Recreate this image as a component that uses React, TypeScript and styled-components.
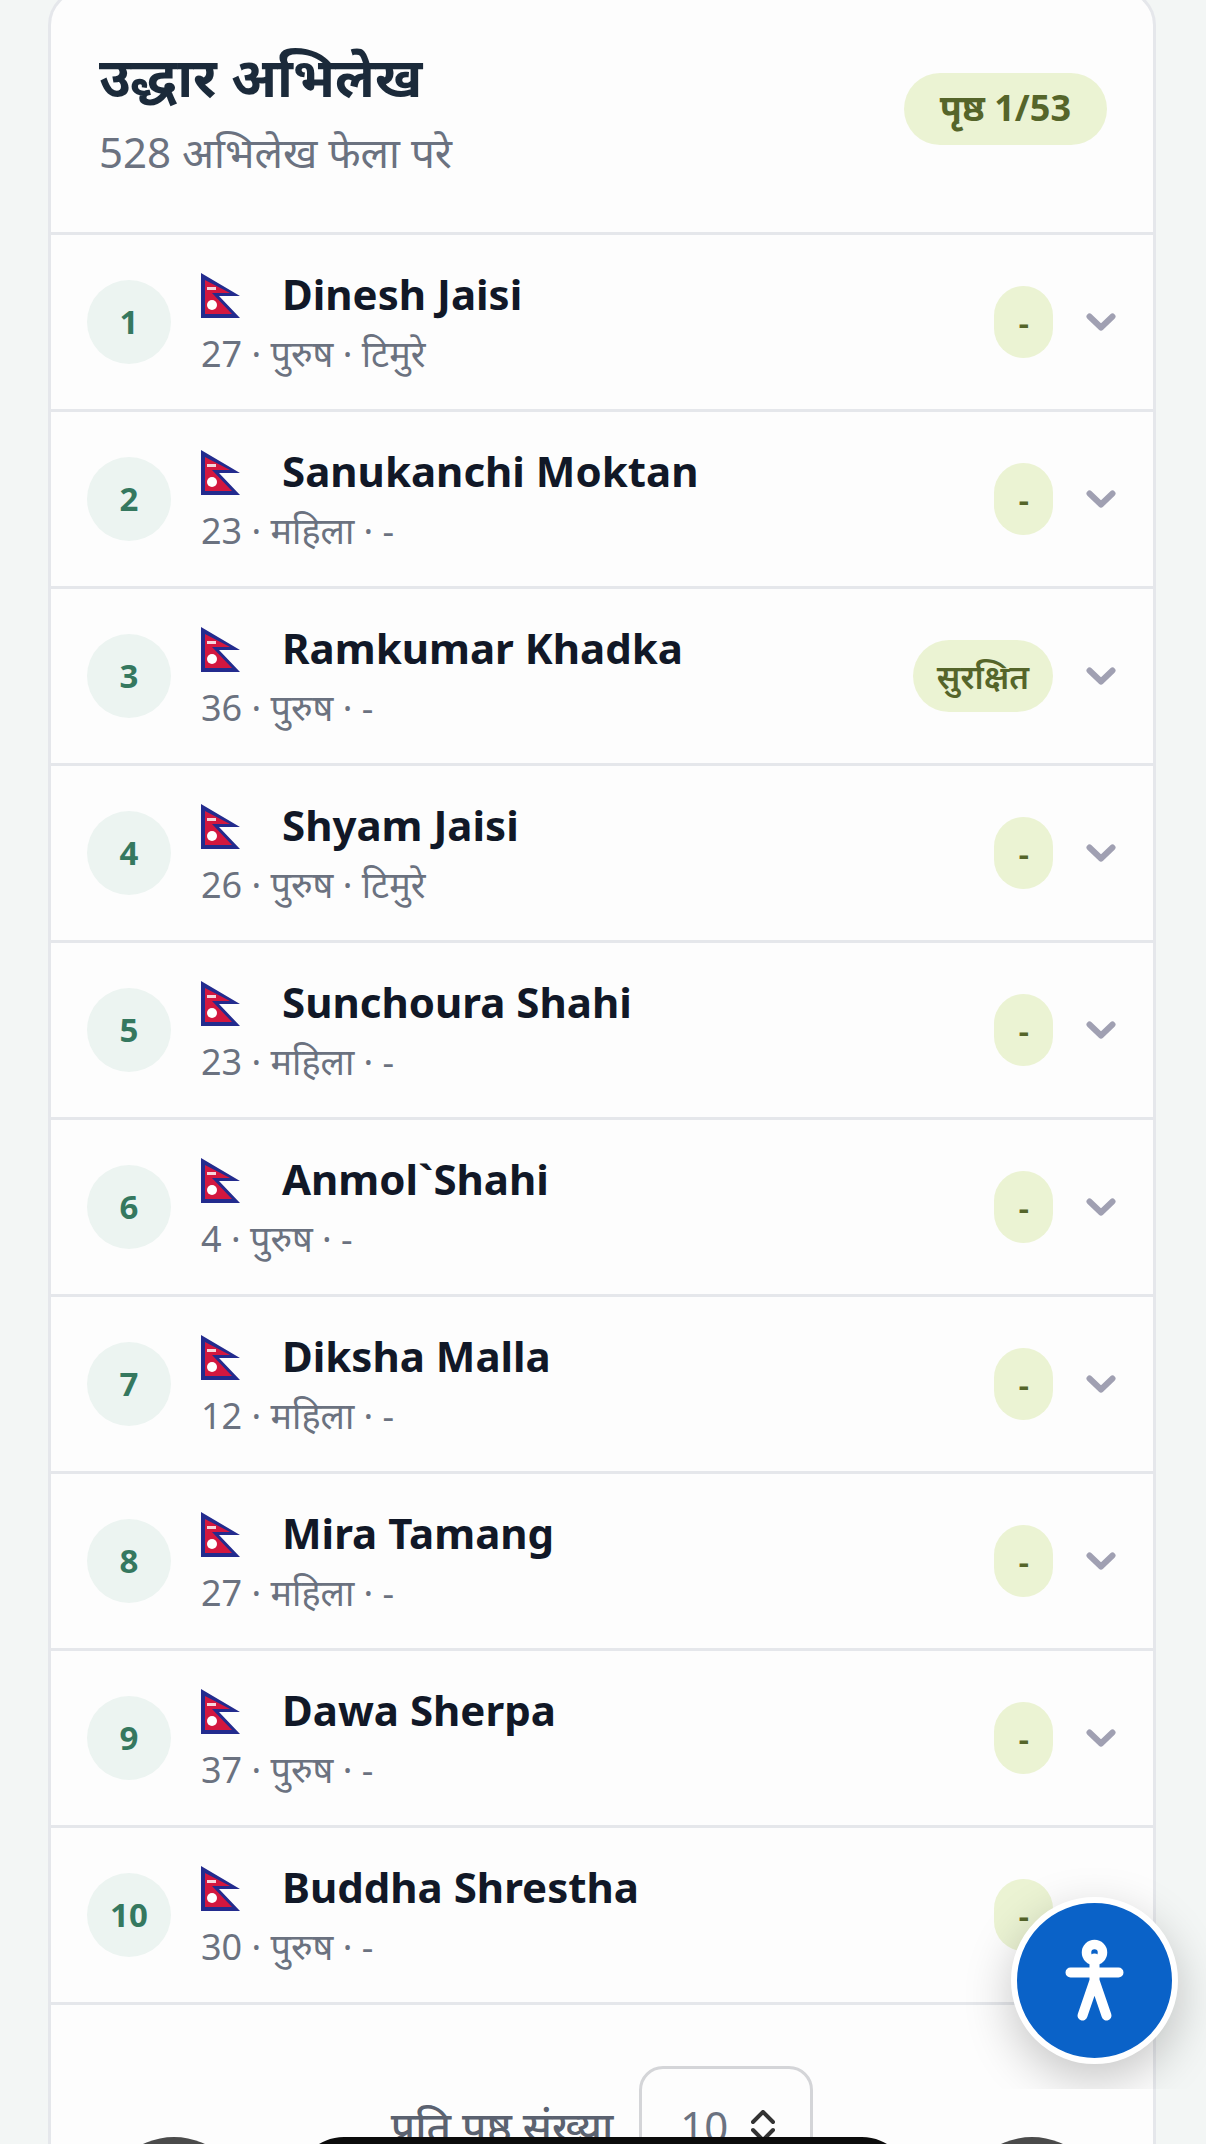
import React from "react";
import styled, { createGlobalStyle } from "styled-components";

const GlobalStyle = createGlobalStyle`
  html, body {
    margin: 0;
    padding: 0;
    background: #f3f6f5;
    font-family: "Noto Sans", "Noto Sans Devanagari", sans-serif;
  }
  #root {
    height: 2144px;
    overflow: hidden;
    position: relative;
  }
`;

const Page = styled.div`
  padding: 0 50px 0 48px;
`;

const Card = styled.section`
  margin-top: -11px;
  background: #fdfdfd;
  border: 3px solid #e5e7eb;
  border-bottom: none;
  border-radius: 36px 36px 0 0;
`;

const Header = styled.header`
  height: 243px;
  box-sizing: border-box;
  display: flex;
  align-items: center;
  justify-content: space-between;
  padding: 0 46px 0 48px;
  border-bottom: 3px solid #e5e7eb;
`;

const Title = styled.h1`
  margin: -2px 0 0;
  font-size: 54px;
  font-weight: 700;
  line-height: 72px;
  color: #1b2a3a;
`;

const Subtitle = styled.p`
  margin: 10px 0 0;
  font-size: 42px;
  line-height: 60px;
  color: #6b7280;
`;

const PagePill = styled.span`
  padding: 0 36px 3px;
  height: 72px;
  box-sizing: border-box;
  margin-bottom: 6px;
  display: flex;
  align-items: center;
  border-radius: 36px;
  background: #ebf3d3;
  color: #55652a;
  font-size: 36px;
  font-weight: 700;
`;

const Row = styled.div`
  height: 177px;
  box-sizing: border-box;
  display: flex;
  align-items: center;
  padding: 0 37px 0 36px;
  border-bottom: 3px solid #e5e7eb;
`;

const Rank = styled.span`
  width: 84px;
  height: 84px;
  box-sizing: border-box;
  padding-bottom: 2px;
  flex: none;
  border-radius: 50%;
  background: #ecf4f1;
  color: #35785f;
  font-size: 33px;
  font-weight: 700;
  display: flex;
  align-items: center;
  justify-content: center;
`;

const Info = styled.div`
  flex: 1;
  margin-left: 30px;
  padding-top: 2px;
`;

const NameLine = styled.div`
  display: flex;
  align-items: center;
  gap: 42px;
`;

const Name = styled.span`
  font-size: 42px;
  font-weight: 700;
  line-height: 54px;
  color: #111827;
`;

const Meta = styled.div`
  margin-top: 8px;
  font-size: 36px;
  line-height: 50px;
  color: #6b7280;
`;

const Status = styled.span`
  padding: 0 24px;
  height: 72px;
  display: flex;
  align-items: center;
  border-radius: 36px;
  background: #ebf3d3;
  color: #55652a;
  font-size: 33px;
  font-weight: 600;
`;

const ChevronIcon = styled.svg`
  width: 30px;
  height: 18px;
  margin-left: 33px;
  flex: none;
`;

const Pager = styled.div`
  padding-top: 61px;
  display: flex;
  justify-content: center;
  align-items: center;
  gap: 26px;
`;

const PagerLabel = styled.label`
  font-size: 42px;
  font-weight: 500;
  color: #5b6270;
`;

const PageSize = styled.div`
  width: 174px;
  height: 118px;
  box-sizing: border-box;
  border: 3px solid #d4d5d8;
  border-radius: 24px;
  padding: 0 35px 0 38px;
  display: flex;
  align-items: center;
  justify-content: space-between;
  font-size: 42px;
  color: #6b7280;
`;

const UpDownIcon = styled.svg`
  width: 24px;
  height: 46px;
  margin-top: 16px;
`;

const FlagIcon = styled.svg`
  flex: none;
  margin-top: 2px;
  filter: blur(0.5px);
`;

const A11yClip = styled.div`
  position: absolute;
  top: 1840px;
  left: 900px;
  right: 0;
  height: 249px;
  overflow: hidden;
`;

const A11yButton = styled.button`
  position: absolute;
  top: 57px;
  left: 111px;
  width: 167px;
  height: 167px;
  padding: 0;
  box-sizing: border-box;
  border: 6px solid #fff;
  border-radius: 50%;
  background: #0a62c8;
  box-shadow: 0 16px 48px rgba(0, 0, 0, 0.22);
  display: flex;
  align-items: center;
  justify-content: center;
`;

const GestureBar = styled.div`
  position: absolute;
  top: 2137px;
  left: 296px;
  width: 614px;
  height: 60px;
  border-radius: 48px 48px 0 0;
  background: #0c0c0c;
`;

const NavDot = styled.div<{ $left: number }>`
  position: absolute;
  top: 2137px;
  left: ${(p) => p.$left}px;
  width: 144px;
  height: 144px;
  border-radius: 50%;
  background: #4b4b4b;
`;

function NepalFlag() {
  return (
    <FlagIcon width="39" height="45" viewBox="0 0 39 45">
      <path d="M0 0L39 23H18L39 45H0Z" fill="#232b8e" />
      <path d="M4 7L29 20H11L31 41H4Z" fill="#d3173f" />
      <rect x="6" y="14" width="9" height="3" fill="#f6d6dc" />
      <circle cx="11" cy="32" r="5" fill="#fff" />
    </FlagIcon>
  );
}

function Chevron() {
  return (
    <ChevronIcon viewBox="0 0 30 18">
      <path d="M3.5 3.5L15 14.5L26.5 3.5" fill="none" stroke="#a0a0b2" strokeWidth="6" strokeLinecap="round" strokeLinejoin="round" />
    </ChevronIcon>
  );
}

function UpDown() {
  return (
    <UpDownIcon viewBox="0 0 24 46">
      <path d="M2 12L12 2L22 12M2 20L12 30L22 20" fill="none" stroke="#333" strokeWidth="4" strokeLinecap="round" strokeLinejoin="round" />
    </UpDownIcon>
  );
}

const rows = [
  ["Dinesh Jaisi", "27 · पुरुष · टिमुरे", "-"],
  ["Sanukanchi Moktan", "23 · महिला · -", "-"],
  ["Ramkumar Khadka", "36 · पुरुष · -", "सुरक्षित"],
  ["Shyam Jaisi", "26 · पुरुष · टिमुरे", "-"],
  ["Sunchoura Shahi", "23 · महिला · -", "-"],
  ["Anmol`Shahi", "4 · पुरुष · -", "-"],
  ["Diksha Malla", "12 · महिला · -", "-"],
  ["Mira Tamang", "27 · महिला · -", "-"],
  ["Dawa Sherpa", "37 · पुरुष · -", "-"],
  ["Buddha Shrestha", "30 · पुरुष · -", "-"],
];

export default function App() {
  return (
    <>
      <GlobalStyle />
      <Page>
        <Card>
          <Header>
            <div>
              <Title>उद्धार अभिलेख</Title>
              <Subtitle>528 अभिलेख फेला परे</Subtitle>
            </div>
            <PagePill>पृष्ठ 1/53</PagePill>
          </Header>
          {rows.map((r, i) => (
            <Row key={i}>
              <Rank>{i + 1}</Rank>
              <Info>
                <NameLine>
                  <NepalFlag />
                  <Name>{r[0]}</Name>
                </NameLine>
                <Meta>{r[1]}</Meta>
              </Info>
              <Status>{r[2]}</Status>
              <Chevron />
            </Row>
          ))}
          <Pager>
            <PagerLabel>प्रति पृष्ठ संख्या</PagerLabel>
            <PageSize>
              10
              <UpDown />
            </PageSize>
          </Pager>
        </Card>
      </Page>
      <A11yClip>
        <A11yButton>
          <svg width="155" height="155" viewBox="6.5 6.5 155 155">
            <circle cx="84" cy="56" r="8" fill="none" stroke="#fff" strokeWidth="9.5" />
            <path d="M60 76H108M84 62V84M84 84L72 119M84 84L96 119" fill="none" stroke="#fff" strokeWidth="10" strokeLinecap="round" />
          </svg>
        </A11yButton>
      </A11yClip>
      <NavDot $left={102} />
      <GestureBar />
      <NavDot $left={960} />
    </>
  );
}
